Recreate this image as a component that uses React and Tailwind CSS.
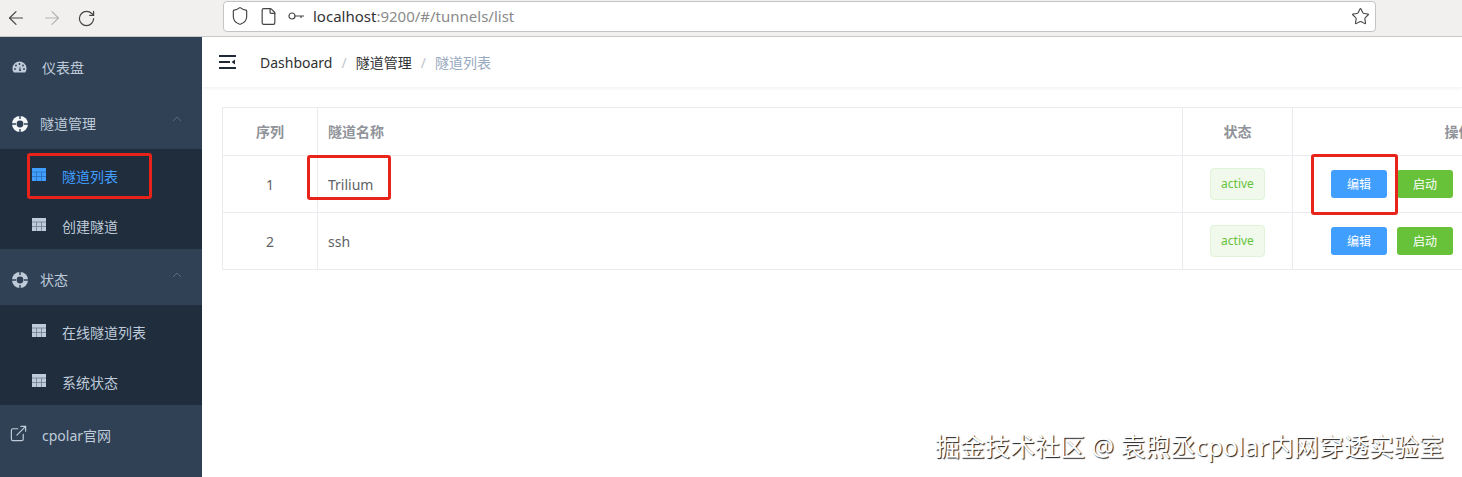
import { ArrowLeft, ArrowRight, RotateCw, Shield, File, Star, ExternalLink } from "lucide-react"

const FONT = { fontFamily: '"Noto Sans", "Noto Sans CJK SC", sans-serif' }

function GaugeIcon() {
  return (
    <svg width="15" height="12" viewBox="0 0 15 12" className="shrink-0">
      <path d="M7.5 0.5a7 7 0 0 0-7 7c0 1.5.5 2.9 1.3 4h11.4c.8-1.1 1.3-2.5 1.3-4a7 7 0 0 0-7-7z" fill="#bfcbd9" />
      <circle cx="4" cy="4.5" r="0.9" fill="#304156" />
      <circle cx="7.5" cy="3" r="0.9" fill="#304156" />
      <circle cx="11" cy="4.5" r="0.9" fill="#304156" />
      <circle cx="3" cy="8" r="0.9" fill="#304156" />
      <circle cx="12" cy="8" r="0.9" fill="#304156" />
      <path d="M7 10l1-5 1 5z" fill="#304156" />
    </svg>
  )
}

function RingIcon({ color }) {
  return (
    <svg width="16" height="16" viewBox="0 0 16 16" className="shrink-0">
      <circle cx="8" cy="8" r="8" fill={color} />
      <circle cx="8" cy="8" r="3.4" fill="#304156" />
      <path d="M0 8h4M12 8h4M8 0v3M8 13v3" stroke="#304156" strokeWidth="1.4" />
    </svg>
  )
}

function TableIcon({ color, line }) {
  return (
    <svg width="14" height="13" viewBox="0 0 14 13" className="shrink-0">
      <rect width="14" height="13" fill={color} />
      <path d="M0 4h14M0 8.500h14M4.500 4v9M9.500 4v9" stroke={line} strokeWidth="0.8" />
    </svg>
  )
}

function MenuToggle() {
  return (
    <svg width="17" height="14" viewBox="0 0 17 14" className="shrink-0">
      <path d="M0 1h17M0 7h11M0 13h17" stroke="#1f2937" strokeWidth="1.8" />
      <path d="M16 4.500v5l-3.500-2.500z" fill="#1f2937" />
    </svg>
  )
}

function KeyIcon() {
  return (
    <svg width="16" height="10" viewBox="0 0 16 10" className="shrink-0">
      <circle cx="4" cy="5" r="3" fill="none" stroke="#444" strokeWidth="1.2" />
      <path d="M7 5h9M13 5v2" stroke="#444" strokeWidth="1.2" fill="none" />
    </svg>
  )
}

function MenuTitle({ icon, label, chevron }) {
  return (
    <div className="h-14 flex items-center pl-3 pr-5 text-[14px] text-[#bfcbd9]">
      <span className="w-[28px] flex items-center mt-1.5">{icon}</span>
      <span className="pt-1">{label}</span>
      {chevron && (
        <svg width="10" height="6" viewBox="0 0 10 6" className="ml-auto mb-1">
          <path d="M1 5l4-4 4 4" fill="none" stroke="#566a80" strokeWidth="1" />
        </svg>
      )}
    </div>
  )
}

function SubItem({ label, active }) {
  return (
    <div className={`h-[50px] flex items-center pl-8 text-[14px] ${active ? "text-[#409eff]" : "text-[#bfcbd9]"}`}>
      <span className="w-[30px] flex items-center">
        {active ? <TableIcon color="#409eff" line="#2a6fb5" /> : <TableIcon color="#bfcbd9" line="#6d7d8e" />}
      </span>
      <span className="pt-1">{label}</span>
    </div>
  )
}

function Sidebar() {
  return (
    <aside className="w-[202px] shrink-0 bg-[#304156]">
      <div className="h-14 flex items-center pl-3 text-[14px] text-[#bfcbd9]">
        <span className="w-[30px] flex items-center mt-[3px]"><GaugeIcon /></span>
        <span className="pt-1">仪表盘</span>
      </div>
      <MenuTitle icon={<RingIcon color="#f4f6f8" />} label="隧道管理" chevron />
      <div className="bg-[#1f2d3d]">
        <SubItem label="隧道列表" active />
        <SubItem label="创建隧道" />
      </div>
      <MenuTitle icon={<RingIcon color="#bfcbd9" />} label="状态" chevron />
      <div className="bg-[#1f2d3d]">
        <SubItem label="在线隧道列表" />
        <SubItem label="系统状态" />
      </div>
      <div className="h-14 flex items-center pl-[9px] text-[14px] text-[#bfcbd9]">
        <span className="w-[33px] flex items-center">
          <ExternalLink size={19} strokeWidth={1.5} />
        </span>
        <span className="pt-1">cpolar官网</span>
      </div>
    </aside>
  )
}

function Row({ index, name }) {
  return (
    <tr className="h-[57px] border-b border-[#e9ebee] text-[14px] text-[#606266]">
      <td className="border-r border-[#e9ebee] text-center">{index}</td>
      <td className="border-r border-[#e9ebee] px-2.5">{name}</td>
      <td className="border-r border-[#e9ebee] text-center">
        <span className="inline-flex items-center justify-center w-[55px] h-8 rounded border border-[#e1f3d8] bg-[#f0f9eb] text-[12px] text-[#67c23a]">active</span>
      </td>
      <td className="pl-[38px]">
        <div className="flex gap-[10px]">
          <span className="w-14 h-7 pt-px rounded-[3px] bg-[#409eff] text-white text-[12px] flex items-center justify-center">编辑</span>
          <span className="w-14 h-7 pt-px rounded-[3px] bg-[#67c23a] text-white text-[12px] flex items-center justify-center">启动</span>
        </div>
      </td>
    </tr>
  )
}

export default function App() {
  return (
    <div className="relative w-[1462px] h-[477px] overflow-hidden bg-white flex flex-col" style={FONT}>
      <div className="h-[37px] shrink-0 bg-[#f2f0ef] border-b border-[#c8c8c8] flex items-center">
        <div className="w-[223px] flex items-center pl-[5px] gap-[14px] text-[#444]">
          <ArrowLeft size={22} strokeWidth={1.3} />
          <ArrowRight size={22} strokeWidth={1.3} className="text-[#b5b3b2]" />
          <RotateCw size={19} strokeWidth={1.5} />
        </div>
        <div className="w-[1153px] h-[31px] -mt-1 bg-white border border-[#c4c4c4] rounded-[4px] flex items-center pl-[6px] pr-[5px] text-[#444]">
          <Shield size={20} strokeWidth={1.4} />
          <File size={19} strokeWidth={1.5} className="ml-[9px]" />
          <span className="ml-[10px]"><KeyIcon /></span>
          <span className="ml-[9px] text-[15px] text-[#8a8a8a]"><span className="text-[#333]">localhost</span>:9200/#/tunnels/list</span>
          <Star size={19} strokeWidth={1.4} className="ml-auto" />
        </div>
      </div>

      <div className="flex flex-1 min-h-0">
        <Sidebar />
        <main className="flex-1 min-w-0 overflow-hidden">
          <header className="h-[50px] flex items-center pl-[17px] shadow-[0_1px_4px_rgba(0,21,41,0.08)] text-[14px]">
            <MenuToggle />
            <span className="ml-[24px] text-[#303133]">Dashboard</span>
            <span className="mx-[9px] text-[#c0c4cc]">/</span>
            <span className="text-[#303133]">隧道管理</span>
            <span className="mx-[9px] text-[#c0c4cc]">/</span>
            <span className="text-[#97a8be]">隧道列表</span>
          </header>
          <div className="pl-5 pt-5">
            <table className="table-fixed w-[1402px] border-collapse border border-[#e9ebee]">
              <colgroup>
                <col className="w-[95px]" />
                <col className="w-[865px]" />
                <col className="w-[110px]" />
                <col className="w-[332px]" />
              </colgroup>
              <thead>
                <tr className="h-[48px] border-b border-[#e9ebee] text-[14px] text-[#909399]">
                  <th className="border-r border-[#e9ebee] text-center font-bold">序列</th>
                  <th className="border-r border-[#e9ebee] text-left px-2.5 font-bold">隧道名称</th>
                  <th className="border-r border-[#e9ebee] text-center font-bold">状态</th>
                  <th className="text-center font-bold">操作</th>
                </tr>
              </thead>
              <tbody>
                <Row index="1" name="Trilium" />
                <Row index="2" name="ssh" />
              </tbody>
            </table>
          </div>
        </main>
      </div>

      {/* red annotation boxes drawn on top of the screenshot */}
      <div className="absolute left-[27px] top-[153px] w-[125px] h-[46px] rounded-[3px] border-[3px] border-[#e8231a]" />
      <div className="absolute left-[307px] top-[155px] w-[84px] h-[45px] rounded-[3px] border-[3px] border-[#e8231a]" />
      <div className="absolute left-[1311px] top-[154px] w-[87px] h-[61px] rounded-[3px] border-[3px] border-[#e8231a]" />

      {/* watermark */}
      <div className="absolute left-[935px] top-[430px] text-[25px] leading-[32px] whitespace-nowrap text-white [text-shadow:1px_1px_1px_rgba(0,0,0,0.9)]">
        掘金技术社区 @ 袁煦丞cpolar内网穿透实验室
      </div>
    </div>
  )
}
